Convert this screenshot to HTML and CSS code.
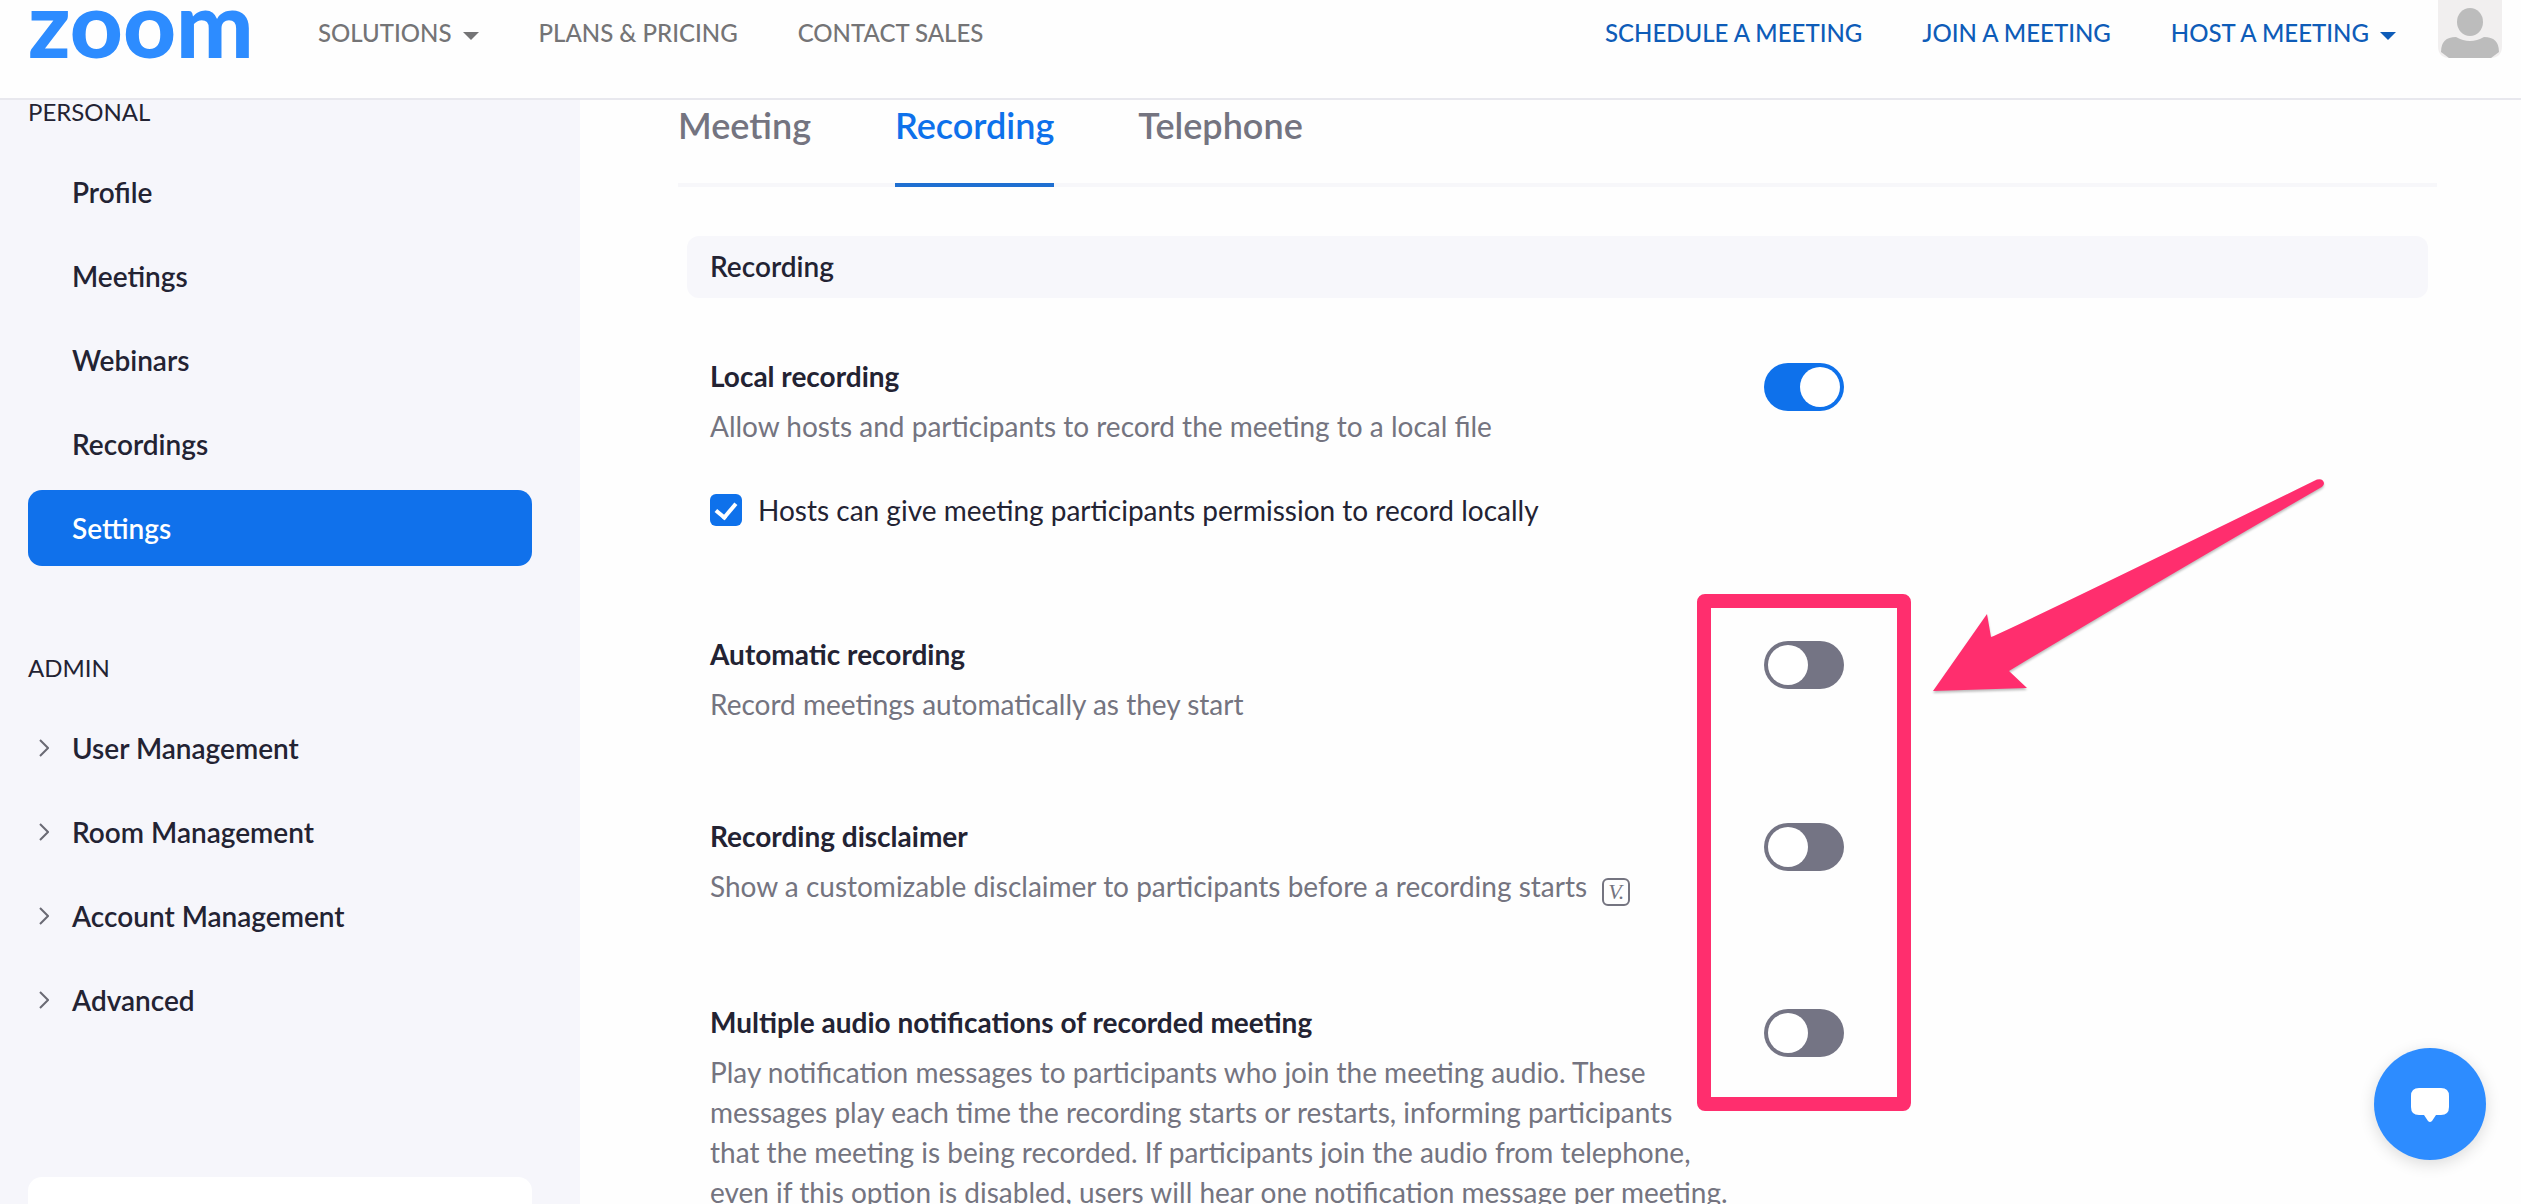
FILE: index.html
```html
<!DOCTYPE html>
<html lang="en">
<head>
  <meta charset="UTF-8">
  <title>Zoom Settings</title>
  <link rel="stylesheet" href="styles.css">
</head>
<body>

  <header class="topbar">
    <a href="#" class="logo">zoom</a>
    <nav class="nav">
      <a href="#">SOLUTIONS <span class="caret"></span></a>
      <a href="#">PLANS &amp; PRICING</a>
      <a href="#">CONTACT SALES</a>
    </nav>
    <nav class="nav nav-actions">
      <a href="#">SCHEDULE A MEETING</a>
      <a href="#">JOIN A MEETING</a>
      <a href="#">HOST A MEETING <span class="caret"></span></a>
    </nav>
    <a href="#" class="avatar" aria-label="Account">
      <svg width="64" height="58" viewBox="0 0 64 58">
        <path d="M0 0H64V46Q64 58 52 58H12Q0 58 0 46Z" fill="#f1efef"/>
        <ellipse cx="32" cy="22" rx="13" ry="14" fill="#bcbcbc"/>
        <path d="M3 52Q3 37 18 37Q32 45 46 37Q61 37 61 52L53 58H11Z" fill="#bcbcbc"/>
      </svg>
    </a>
  </header>

  <div class="page">
    <aside class="sidebar">
      <h2>PERSONAL</h2>
      <ul>
        <li><a href="#">Profile</a></li>
        <li><a href="#">Meetings</a></li>
        <li><a href="#">Webinars</a></li>
        <li><a href="#">Recordings</a></li>
        <li><a href="#" class="active">Settings</a></li>
      </ul>
      <h2>ADMIN</h2>
      <ul class="admin">
        <li><a href="#"><svg class="chevron" viewBox="0 0 10 18"><path d="M1 1l8 8-8 8"/></svg>User Management</a></li>
        <li><a href="#"><svg class="chevron" viewBox="0 0 10 18"><path d="M1 1l8 8-8 8"/></svg>Room Management</a></li>
        <li><a href="#"><svg class="chevron" viewBox="0 0 10 18"><path d="M1 1l8 8-8 8"/></svg>Account Management</a></li>
        <li><a href="#"><svg class="chevron" viewBox="0 0 10 18"><path d="M1 1l8 8-8 8"/></svg>Advanced</a></li>
      </ul>
      <div class="help-card"></div>
    </aside>

    <main>
      <nav class="tabs">
        <a href="#">Meeting</a>
        <a href="#" class="active">Recording</a>
        <a href="#">Telephone</a>
      </nav>

      <section class="settings">
        <h3 class="section-title">Recording</h3>

        <div class="setting">
          <div class="setting-text">
            <label class="name" for="localRecording">Local recording</label>
            <p>Allow hosts and participants to record the meeting to a local file</p>
            <div class="option">
              <input type="checkbox" id="hostPermission" checked>
              <label for="hostPermission">Hosts can give meeting participants permission to record locally</label>
            </div>
          </div>
          <input type="checkbox" class="switch" id="localRecording" checked>
        </div>

        <div class="setting">
          <div class="setting-text">
            <label class="name" for="autoRecording">Automatic recording</label>
            <p>Record meetings automatically as they start</p>
          </div>
          <input type="checkbox" class="switch" id="autoRecording">
        </div>

        <div class="setting">
          <div class="setting-text">
            <label class="name" for="disclaimer">Recording disclaimer</label>
            <p class="with-badge">Show a customizable disclaimer to participants before a recording starts <span class="badge">V.</span></p>
          </div>
          <input type="checkbox" class="switch" id="disclaimer">
        </div>

        <div class="setting">
          <div class="setting-text">
            <label class="name" for="audioNotifications">Multiple audio notifications of recorded meeting</label>
            <p>Play notification messages to participants who join the meeting audio. These messages play each time the recording starts or restarts, informing participants<br>
            that the meeting is being recorded. If participants join the audio from telephone, even if this option is disabled, users will hear one notification message per meeting.</p>
          </div>
          <input type="checkbox" class="switch" id="audioNotifications">
        </div>

        <div class="highlight"></div>
        <svg class="arrow" viewBox="0 0 400 220">
          <path d="M3 216L57 139L61 162Q90 150 387 4.500Q393 3 394 8Q394 11 390 13Q210 117 79 196L97 213Z"/>
        </svg>
      </section>
    </main>
  </div>

  <button class="chat" aria-label="Chat">
    <svg width="38" height="34" viewBox="0 0 38 34">
      <path d="M8 0H30Q38 0 38 8V19Q38 27 30 27H25L21 33Q19 35 17 33L13 27H8Q0 27 0 19V8Q0 0 8 0Z" fill="#fff"/>
    </svg>
  </button>

</body>
</html>
```
FILE: styles.css
```css
* {
  box-sizing: border-box;
}

body {
  margin: 0;
  height: 100vh;
  overflow: hidden;
  display: flex;
  flex-direction: column;
  font-family: Lato, "Liberation Sans", sans-serif;
  font-size: 28px;
  line-height: 40px;
  color: #232333;
  background: #fefefe;
}

a {
  color: inherit;
  text-decoration: none;
}

/* top bar */
.topbar {
  flex: none;
  height: 100px;
  padding: 0 19px 32px 28px;
  display: flex;
  align-items: center;
  border-bottom: 2px solid #e8e8ee;
}

.logo {
  width: 220px;
  padding-bottom: 20px;
  font-size: 92px;
  font-weight: 900;
  line-height: 66px;
  color: #2d8cff;
}

.nav {
  margin-left: 70px;
  display: flex;
  gap: 60px;
  font-size: 24px;
  font-weight: 500;
  color: #747476;
}

.nav-actions {
  margin-left: auto;
  margin-right: 42px;
  color: #0e5cb8;
}

.caret {
  display: inline-block;
  margin-left: 5px;
  border: 8px solid transparent;
  border-top-color: currentColor;
  border-bottom: 0;
  vertical-align: 2px;
}

.avatar {
  align-self: flex-start;
  height: 58px;
}

.avatar svg {
  display: block;
}

/* layout */
.page {
  flex: 1;
  min-height: 0;
  display: flex;
}

.sidebar {
  flex: none;
  width: 580px;
  padding: 0 48px 0 28px;
  overflow: hidden;
  display: flex;
  flex-direction: column;
  background: #f6f6fb;
}

.sidebar h2 {
  margin: 0;
  font-size: 24px;
  font-weight: 400;
  line-height: 24px;
}

.sidebar ul {
  margin: 26px 0 82px;
  padding: 0;
  list-style: none;
}

.sidebar .admin {
  margin-bottom: 131px;
}

.sidebar li {
  margin: 8px 0;
}

.sidebar li:first-child {
  margin-top: 4px;
}

.sidebar li a {
  position: relative;
  display: block;
  padding: 18px 44px;
  border-radius: 14px;
  font-weight: 600;
}

.sidebar li a.active {
  background: #1071eb;
  color: #fff;
}

.chevron {
  position: absolute;
  left: 11px;
  top: 29px;
  width: 10px;
  height: 18px;
  fill: none;
  stroke: #6a6a74;
  stroke-width: 2;
}

.sidebar .help-card {
  flex: none;
  height: 120px;
  border-radius: 14px;
  background: #fff;
}

main {
  flex: 1;
  min-width: 0;
  overflow: hidden;
  padding: 0 84px 0 98px;
}

/* tabs */
.tabs {
  display: flex;
  gap: 84px;
  border-bottom: 4px solid #f7f7fa;
  font-size: 36px;
  font-weight: 600;
  color: #747480;
}

.tabs a {
  padding: 5px 0 38px;
  margin-bottom: -4px;
  border-bottom: 4px solid transparent;
}

.tabs a.active {
  color: #0e71eb;
  border-bottom-color: #1f6fd1;
}

/* settings list */
.settings {
  position: relative;
  padding: 49px 9px 0;
}

.section-title {
  margin: 0 0 58px;
  padding: 10px 23px 12px;
  border-radius: 12px;
  background: #f7f7fb;
  font-size: 28px;
  font-weight: 600;
}

.setting {
  display: flex;
  align-items: flex-start;
  gap: 32px;
  padding: 0 14px 92px 23px;
}

.setting-text {
  width: 60%;
}

.name {
  display: block;
  font-weight: 700;
}

.setting p {
  margin: 10px 0 0;
  color: #747480;
}

.option {
  display: flex;
  align-items: center;
  gap: 16px;
  margin: 44px 0 12px;
}

.option input {
  appearance: none;
  width: 32px;
  height: 32px;
  margin: 0;
  border-radius: 6px;
  background: #0e71eb;
  display: grid;
  place-items: center;
}

.option input:checked::before {
  content: "";
  width: 16px;
  height: 9px;
  border: solid #fff;
  border-width: 0 0 4px 4px;
  transform: translateY(-2px) rotate(-50deg);
}

.setting .with-badge {
  padding-bottom: 4px;
}

.badge {
  display: inline-block;
  width: 28px;
  height: 28px;
  margin-left: 8px;
  border: 2px solid #747480;
  border-radius: 6px;
  font: italic 22px/24px "Liberation Serif", serif;
  text-align: center;
  vertical-align: -2px;
}

.switch {
  appearance: none;
  flex: none;
  width: 80px;
  height: 48px;
  margin: 7px 0 0;
  padding: 4px;
  border-radius: 24px;
  background: #747484;
}

.switch::before {
  content: "";
  display: block;
  width: 40px;
  height: 40px;
  border-radius: 50%;
  background: #fff;
}

.switch:checked {
  background: #0e71eb;
}

.switch:checked::before {
  margin-left: auto;
}

/* callout over the switches */
.highlight {
  position: absolute;
  left: 1019px;
  top: 407px;
  width: 214px;
  height: 517px;
  border: 14px solid #ff2e6e;
  border-radius: 8px;
}

.arrow {
  position: absolute;
  left: 1252px;
  top: 288px;
  width: 400px;
  height: 220px;
  fill: #ff2e6e;
  filter: drop-shadow(0 2px 1px rgba(0, 0, 0, 0.25));
}

/* chat button */
.chat {
  position: fixed;
  right: 35px;
  bottom: 44px;
  width: 112px;
  height: 112px;
  padding: 4px 0 0;
  border: 0;
  border-radius: 50%;
  background: #2d8cff;
  box-shadow: 0 4px 16px rgba(0, 0, 0, 0.14);
}
```
